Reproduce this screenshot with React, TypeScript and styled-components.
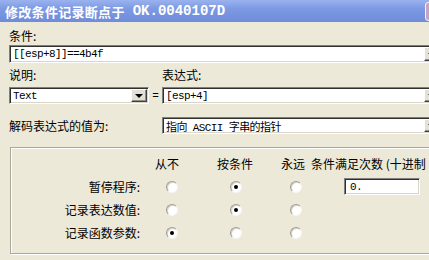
import React from 'react';
import styled, { createGlobalStyle } from 'styled-components';

const GlobalStyle = createGlobalStyle`
  html, body {
    margin: 0;
    padding: 0;
    overflow: hidden;
    background: #ece9d8;
  }
  body {
    font-family: "Noto Sans CJK SC", "Noto Sans", sans-serif;
    font-size: 12px;
    color: #000;
  }
`;

// the dialog is wider than the shot, so it is clipped at the window edge
const Viewport = styled.div`
  width: 429px;
  height: 260px;
  overflow: hidden;
`;

const Window = styled.div`
  width: 470px;
  height: 260px;
  background: #ece9d8;
  display: flex;
  flex-direction: column;
`;

const TitleBar = styled.div`
  height: 22px;
  flex: none;
  display: flex;
  align-items: center;
  padding-left: 5px;
  background: linear-gradient(to bottom, #9ab2ef 0%, #7c99e2 40%, #6f8cdb 100%);
  color: #fff;
  font-weight: bold;
  white-space: nowrap;
`;

const TitleCjk = styled.span`
  font-family: "Noto Sans CJK SC", sans-serif;
  font-size: 13px;
  letter-spacing: 0.3px;
`;

const TitleMono = styled.span`
  font-family: "Liberation Mono", monospace;
  font-size: 14px;
  margin-left: 8px;
`;

const CloseButton = styled.div`
  margin-left: auto;
  margin-right: 24px;
  width: 19px;
  height: 17px;
  border: 1px solid #f4f4fb;
  border-radius: 3px;
  background: #c8a4c4;
`;

const Body = styled.div`
  padding-left: 9px;
  display: flex;
  flex-direction: column;
`;

const Label = styled.div<{ $top?: number; $width?: number }>`
  height: 12px;
  line-height: 12px;
  margin-top: ${p => p.$top ?? 0}px;
  width: ${p => (p.$width ? `${p.$width}px` : 'auto')};
  flex: none;
  white-space: nowrap;
`;

const Row = styled.div<{ $top: number }>`
  display: flex;
  align-items: center;
  margin-top: ${p => p.$top}px;
`;

const Field = styled.div<{ $width: number; $height?: number }>`
  box-sizing: border-box;
  width: ${p => p.$width}px;
  height: ${p => p.$height ?? 17}px;
  flex: none;
  display: flex;
  align-items: center;
  background: #fff;
  border: 1px solid;
  border-color: #7f7f7f #ffffff #ffffff #7f7f7f;
  box-shadow: inset 1px 1px 0 #303030, inset -1px -1px 0 #d8d5cc;
  padding-left: 3px;
  font-family: "Liberation Mono", "Noto Sans CJK SC", monospace;
  font-size: 11px;
  letter-spacing: -0.6px;
  white-space: nowrap;
  overflow: hidden;
`;

const FieldText = styled.span`
  flex: 1;
  overflow: hidden;
`;

const DropButton = styled.div`
  box-sizing: border-box;
  width: 16px;
  height: calc(100% - 2px);
  margin-right: 1px;
  flex: none;
  display: flex;
  align-items: center;
  justify-content: center;
  background: #e3e0d6;
  border: 1px solid;
  border-color: #ffffff #404040 #404040 #ffffff;
  box-shadow: inset -1px -1px 0 #8f8d86;

  &::after {
    content: '';
    border-left: 4px solid transparent;
    border-right: 4px solid transparent;
    border-top: 4px solid #000;
    margin-top: 1px;
  }
`;

const Eq = styled.div`
  width: 13px;
  text-align: center;
  flex: none;
  font-family: "Liberation Mono", monospace;
  font-size: 11px;
`;

const GroupBox = styled.div`
  box-sizing: border-box;
  margin-top: 13px;
  margin-left: 1px;
  width: 470px;
  height: 107px;
  border: 1px solid #aca899;
  box-shadow: inset 1px 1px 0 #ffffff, 1px 1px 0 #ffffff;
  padding: 4px 0 0 1px;
  display: grid;
  grid-template-columns: 136px 60px 66px 37px 1fr;
  grid-auto-rows: 23px;
  align-items: center;
`;

const HeadCell = styled.div<{ $ml: number }>`
  margin-left: ${p => p.$ml}px;
  white-space: nowrap;
  line-height: 12px;
`;

const RowLabel = styled.div`
  text-align: right;
  padding-right: 8px;
  line-height: 12px;
  white-space: nowrap;
`;

const Radio = styled.span<{ $checked?: boolean; $ml: number }>`
  box-sizing: border-box;
  display: block;
  width: 12px;
  height: 12px;
  margin-left: ${p => p.$ml}px;
  border-radius: 50%;
  background: #fff;
  border: 1px solid;
  border-color: #a09c90 #f6f5f0 #f6f5f0 #a09c90;
  box-shadow: inset 1px 1px 0 #d6d3ca;
  position: relative;

  &::after {
    content: '';
    display: ${p => (p.$checked ? 'block' : 'none')};
    position: absolute;
    left: 3px;
    top: 3px;
    width: 4px;
    height: 4px;
    border-radius: 50%;
    background: #000;
  }
`;

const Count = styled(Field)`
  margin-left: 33px;
  padding-left: 5px;
`;

const rows = [
  { label: '暂停程序:', pick: 1 },
  { label: '记录表达数值:', pick: 1 },
  { label: '记录函数参数:', pick: 0 },
];

const radioOffsets = [18, 22, 16];

const App = () => {
  return (
    <Viewport>
      <GlobalStyle />
      <Window>
        <TitleBar>
          <TitleCjk>修改条件记录断点于</TitleCjk>
          <TitleMono>OK.0040107D</TitleMono>
          <CloseButton />
        </TitleBar>

        <Body>
          <Label $top={8}>条件:</Label>
          <Row $top={3}>
            <Field $width={433} $height={18}>
              <FieldText>[[esp+8]]==4b4f</FieldText>
              <DropButton />
            </Field>
          </Row>

          <Row $top={6}>
            <Label $width={153}>说明:</Label>
            <Label>表达式:</Label>
          </Row>

          <Row $top={6}>
            <Field $width={140}>
              <FieldText>Text</FieldText>
              <DropButton />
            </Field>
            <Eq>=</Eq>
            <Field $width={280}>
              <FieldText>[esp+4]</FieldText>
              <DropButton />
            </Field>
          </Row>

          <Row $top={13}>
            <Label $width={153}>解码表达式的值为:</Label>
            <Field $width={280}>
              <FieldText>指向 ASCII 字串的指针</FieldText>
              <DropButton />
            </Field>
          </Row>

          <GroupBox>
            <div />
            <HeadCell $ml={7}>从不</HeadCell>
            <HeadCell $ml={9}>按条件</HeadCell>
            <HeadCell $ml={7}>永远</HeadCell>
            <HeadCell $ml={0}>条件满足次数 (十进制</HeadCell>

            {rows.map((r, i) => (
              <React.Fragment key={r.label}>
                <RowLabel>{r.label}</RowLabel>
                {radioOffsets.map((ml, j) => (
                  <div key={j}>
                    <Radio $ml={ml} $checked={r.pick === j} />
                  </div>
                ))}
                <div>
                  {i === 0 && (
                    <Count $width={76}>
                      <FieldText>0.</FieldText>
                    </Count>
                  )}
                </div>
              </React.Fragment>
            ))}
          </GroupBox>
        </Body>
      </Window>
    </Viewport>
  );
};

export default App;
